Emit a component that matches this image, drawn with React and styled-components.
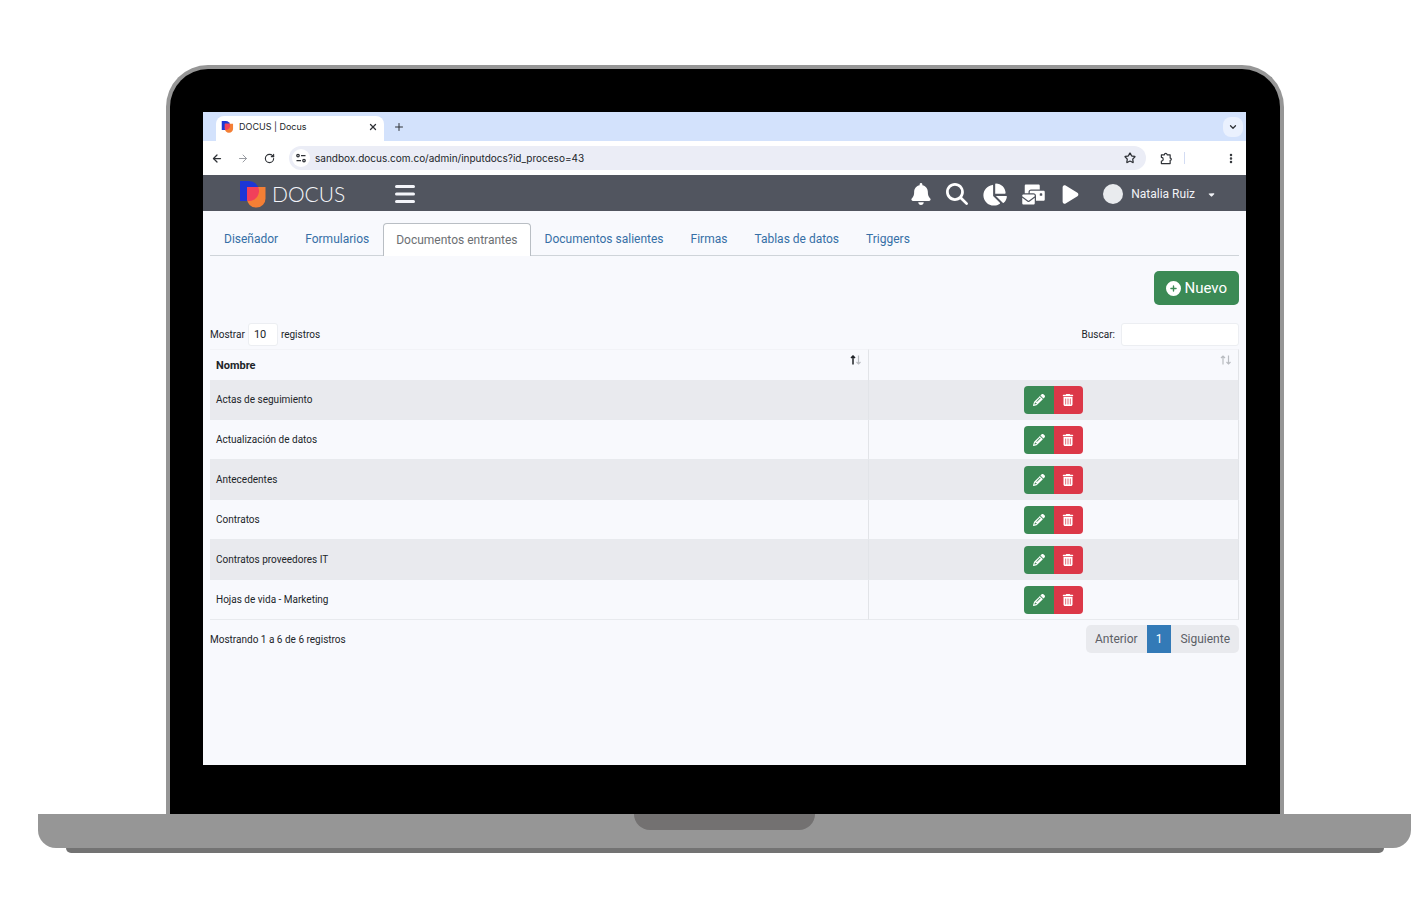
import React from 'react'
import styled, { createGlobalStyle } from 'styled-components';
import {
    FaBell,
    FaMagnifyingGlass,
    FaChartPie,
    FaEnvelopesBulk,
    FaPlay,
    FaCirclePlus,
    FaPencil,
    FaTrashCan,
    FaCaretDown,
} from 'react-icons/fa6';
import { ArrowLeft, ArrowRight, RotateCw, Star, Plus, X, ChevronDown, EllipsisVertical } from 'lucide-react';

const GlobalStyle = createGlobalStyle`
*{
    box-sizing: border-box;
}
body{
    margin: 0;
    background: #ffffff;
    font-family: Roboto, sans-serif;
    font-size: 10px;
    color: #212529;
}
button, input, select{
    font-family: inherit;
    font-size: inherit;
    color: inherit;
    margin: 0;
}
button{
    border: 0;
    padding: 0;
    background: none;
    cursor: pointer;
}
`;

/* ---------- laptop ---------- */

const Stage = styled.div`
padding: 65px 17px 52px 38px;
`;

const Lid = styled.div`
margin: 0 127px 0 128px;
padding: 43px 34px 49px 33px;
background: #000000;
border: 4px solid #969696;
border-bottom: 0;
border-radius: 42px 42px 0 0;
`;

const Screen = styled.div`
display: flex;
flex-direction: column;
min-height: 653px;
background: #f8f9fd;
`;

const Base = styled.div`
display: flex;
justify-content: center;
align-items: flex-start;
height: 34px;
background: #969696;
border-radius: 0 0 18px 18px;
`;

const Notch = styled.div`
width: 181px;
height: 16px;
background: #737171;
border-radius: 0 0 16px 16px;
`;

const Foot = styled.div`
height: 5px;
margin: 0 27px 0 28px;
background: #737373;
border-radius: 0 0 5px 5px;
`;

/* ---------- browser ---------- */

const TabStrip = styled.div`
display: flex;
align-items: flex-end;
height: 29px;
padding: 0 3px 0 13px;
background: #d3e2fc;
`;

const BrowserTab = styled.div`
display: flex;
align-items: center;
width: 168px;
height: 25px;
padding: 0 5px 4px 5px;
background: #ffffff;
border-radius: 8px 8px 0 0;
font-family: Inter, sans-serif;
font-size: 9px;
svg + span{
    flex: 1;
    margin-left: 5px;
}
`;

const IconButton = styled.button`
display: flex;
align-items: center;
justify-content: center;
width: ${({ $size }) => $size || 12}px;
height: ${({ $size }) => $size || 12}px;
border-radius: 8px;
background: ${({ $fill }) => $fill || 'none'};
color: ${({ $faded }) => ($faded ? '#9a9da3' : '#2f3237')};
`;

const StripTools = styled.div`
display: flex;
flex: 1;
align-items: center;
justify-content: space-between;
height: 28px;
padding-left: 9px;
`;

const Toolbar = styled.div`
display: flex;
align-items: center;
height: 34px;
padding: 0 9px 0 8px;
background: #ffffff;
`;

const History = styled.div`
display: flex;
gap: 14px;
margin-right: 14px;
`;

const Address = styled.div`
display: flex;
flex: 1;
align-items: center;
height: 24px;
padding: 0 10px 0 3px;
background: #ebedf6;
border-radius: 12px;
input{
    flex: 1;
    margin-left: 5px;
    padding: 0;
    border: 0;
    outline: 0;
    background: none;
    font-family: Inter, sans-serif;
    font-size: 10px;
}
`;

const SiteInfo = styled.button`
display: flex;
align-items: center;
justify-content: center;
width: 18px;
height: 18px;
border-radius: 9px;
background: #ffffff;
`;

const ToolbarEnd = styled.div`
display: flex;
align-items: center;
justify-content: space-between;
width: 77px;
margin-left: 14px;
`;

const Separator = styled.span`
width: 1px;
height: 12px;
margin-right: 28px;
background: #d3dcf3;
`;

/* ---------- application header ---------- */

const AppBar = styled.header`
display: flex;
align-items: center;
height: 36px;
padding: 2px 30px 0 37px;
background: #51555f;
color: #ffffff;
`;

const Brand = styled.a`
display: flex;
align-items: center;
gap: 6px;
margin-right: 50px;
color: #f4f5fa;
font-family: Lato, sans-serif;
font-size: 21px;
font-weight: 300;
line-height: 24px;
text-decoration: none;
`;

const BarButton = styled.button`
display: flex;
color: #ffffff;
`;

const BarActions = styled.div`
display: flex;
align-items: center;
gap: 14px;
margin-left: auto;
`;

const UserMenu = styled.button`
display: flex;
align-items: center;
margin-left: 8px;
color: #f2f3f7;
font-size: 12px;
line-height: 16px;
span{
    margin: 0 12px 0 8px;
}
`;

const Avatar = styled.i`
width: 20px;
height: 20px;
border-radius: 10px;
background: #e9ebee;
`;

/* ---------- page ---------- */

const Page = styled.main`
padding: 12px 7px 24px;
`;

const Tabs = styled.nav`
display: flex;
gap: 1px;
height: 33px;
padding-left: 1px;
border-bottom: 1px solid #cfd4d9;
`;

const Tab = styled.a`
height: 33px;
padding: ${({ $active }) => ($active ? '8px' : '7px')} 12px 0;
border: 1px solid ${({ $active }) => ($active ? '#b9bec4' : 'transparent')};
border-bottom: 0;
border-radius: 4px 4px 0 0;
background: ${({ $active }) => ($active ? '#ffffff' : 'none')};
color: ${({ $active }) => ($active ? '#6c6f73' : '#366fa6')};
font-size: 12px;
line-height: 16px;
text-decoration: none;
`;

const Actions = styled.div`
display: flex;
justify-content: flex-end;
margin: 15px 0 18px;
`;

const NewButton = styled.button`
display: flex;
align-items: center;
gap: 3px;
height: 34px;
padding: 0 12px;
border-radius: 5px;
background: #3b8a55;
color: #ffffff;
font-size: 15px;
`;

const Filters = styled.div`
display: flex;
justify-content: space-between;
height: 23px;
margin-bottom: 3px;
label{
    display: flex;
    align-items: center;
}
select, input{
    height: 23px;
    border: 1px solid #eceef2;
    border-radius: 3px;
    background: #ffffff;
}
select{
    appearance: none;
    width: 30px;
    margin: 0 3px;
    padding: 0 5px;
    font-size: 11px;
}
input{
    width: 118px;
    margin-left: 6px;
}
`;

const Table = styled.table`
width: 100%;
table-layout: fixed;
border-collapse: separate;
border-spacing: 0;
th, td{
    padding: 0 6px;
    text-align: left;
    border-right: 1px solid #e2e4e8;
}
th{
    height: 31px;
    border-top: 1px solid #f2f3f7;
    font-size: 11px;
    font-weight: 700;
}
th:first-child{
    width: 64%;
}
td{
    height: 40px;
    border-bottom: 1px solid #e8eaee;
}
tbody tr:nth-child(odd){
    background: #e9eaee;
}
`;

const HeadCell = styled.div`
display: flex;
justify-content: space-between;
align-items: center;
height: 20px;
`;

const SortButton = styled.button`
align-self: flex-start;
display: flex;
`;

const ButtonGroup = styled.div`
display: flex;
justify-content: center;
`;

const RowButton = styled.button`
display: flex;
align-items: center;
justify-content: center;
width: ${({ $danger }) => ($danger ? 29 : 30)}px;
height: 28px;
background: ${({ $danger }) => ($danger ? '#dc3848' : '#3b8a55')};
border-radius: ${({ $danger }) => ($danger ? '0 4px 4px 0' : '4px 0 0 4px')};
color: #ffffff;
`;

const Footer = styled.div`
display: flex;
justify-content: space-between;
align-items: center;
margin-top: 5px;
`;

const Pagination = styled.div`
display: flex;
border-radius: 5px;
overflow: hidden;
`;

const PageButton = styled.button`
height: 28px;
padding: 0 9px;
background: ${({ $active }) => ($active ? '#337ab7' : '#e9eaee')};
color: ${({ $active }) => ($active ? '#ffffff' : '#5c6066')};
font-size: 12px;
`;

function Logo({ width, height }) {
    return (
        <svg width={width} height={height} viewBox="0 0 26 27" aria-hidden="true">
            <path d="M0 0h9a10 10 0 0 1 0 20H0z" fill="#1c36d6" />
            <path d="M7 6h18.500v11a9 9 0 0 1-9 9.500a9 9 0 0 1-9.500-9.500z" fill="#f47f35" />
            <path d="M7 6h11.200a10 10 0 0 1-9.200 14H7.600A9 9 0 0 1 7 17z" fill="#f1405a" />
        </svg>
    )
}

function TuneIcon() {
    return (
        <svg width="10" height="10" viewBox="0 0 20 20" fill="none" stroke="#2f3237" strokeWidth="2.500" aria-hidden="true">
            <circle cx="4" cy="5" r="2.500" />
            <path d="M10 5h9M1 15h9" />
            <circle cx="16" cy="15" r="2.500" />
        </svg>
    )
}

function ExtensionIcon() {
    return (
        <svg width="13" height="13" viewBox="0 0 26 26" fill="none" stroke="#2f3237" strokeWidth="2.600" strokeLinejoin="round" aria-hidden="true">
            <path d="M3 5h6.500a3 3 0 0 1 6 0H22v7a2.500 2.500 0 0 1 0 5V24H3v-5.500a4 4 0 0 0 0-8z" />
        </svg>
    )
}

function MenuIcon() {
    return (
        <svg width="20" height="18" viewBox="0 0 20 18" stroke="#f4f5fa" strokeWidth="3" strokeLinecap="round" aria-hidden="true">
            <path d="M1.500 1.500h17M1.500 9h17M1.500 16.500h17" />
        </svg>
    )
}

function SortIcon({ sorted }) {
    return (
        <svg width="12" height="10" viewBox="0 0 12 10" fill="none" strokeWidth="1.200" aria-hidden="true">
            <path d="M3 9.500V1M1 3l2-2 2 2" stroke={sorted ? '#212529' : '#b9bcc1'} strokeWidth={sorted ? 1.5 : 1.2} />
            <path d="M8.500 .5V9M6.500 7l2 2 2-2" stroke="#b9bcc1" />
        </svg>
    )
}

const tabs = [
    'Diseñador',
    'Formularios',
    'Documentos entrantes',
    'Documentos salientes',
    'Firmas',
    'Tablas de datos',
    'Triggers',
];

const documents = [
    'Actas de seguimiento',
    'Actualización de datos',
    'Antecedentes',
    'Contratos',
    'Contratos proveedores IT',
    'Hojas de vida - Marketing',
];

function Browser() {
    return (
        <>
            <TabStrip>
                <BrowserTab>
                    <Logo width={13} height={12} />
                    <span>DOCUS | Docus</span>
                    <IconButton aria-label="Cerrar pestaña"><X size={10} strokeWidth={3} /></IconButton>
                </BrowserTab>
                <StripTools>
                    <IconButton aria-label="Nueva pestaña"><Plus size={12} /></IconButton>
                    <IconButton aria-label="Buscar pestañas" $size={20} $fill="#eaf1fe"><ChevronDown size={10} strokeWidth={3} /></IconButton>
                </StripTools>
            </TabStrip>
            <Toolbar>
                <History>
                    <IconButton aria-label="Atrás"><ArrowLeft size={13} strokeWidth={2.5} /></IconButton>
                    <IconButton aria-label="Adelante" $faded><ArrowRight size={13} /></IconButton>
                    <IconButton aria-label="Recargar"><RotateCw size={11} strokeWidth={2.5} /></IconButton>
                </History>
                <Address>
                    <SiteInfo aria-label="Información del sitio"><TuneIcon /></SiteInfo>
                    <input aria-label="Dirección" defaultValue="sandbox.docus.com.co/admin/inputdocs?id_proceso=43" />
                    <IconButton aria-label="Marcador"><Star size={12} strokeWidth={2.5} /></IconButton>
                </Address>
                <ToolbarEnd>
                    <IconButton aria-label="Extensiones"><ExtensionIcon /></IconButton>
                    <Separator />
                    <IconButton aria-label="Más opciones"><EllipsisVertical size={13} strokeWidth={3} /></IconButton>
                </ToolbarEnd>
            </Toolbar>
        </>
    )
}

function Header() {
    return (
        <AppBar>
            <Brand href="#"><Logo width={26} height={27} />DOCUS</Brand>
            <BarButton aria-label="Menú"><MenuIcon /></BarButton>
            <BarActions>
                <BarButton aria-label="Notificaciones"><FaBell size={22} /></BarButton>
                <BarButton aria-label="Buscar"><FaMagnifyingGlass size={22} /></BarButton>
                <BarButton aria-label="Reportes"><FaChartPie size={25} /></BarButton>
                <BarButton aria-label="Correos"><FaEnvelopesBulk size={25} /></BarButton>
                <BarButton aria-label="Iniciar"><FaPlay size={21} /></BarButton>
                <UserMenu><Avatar /><span>Natalia Ruiz</span><FaCaretDown size={9} /></UserMenu>
            </BarActions>
        </AppBar>
    )
}

function Documents() {
    return (
        <Page>
            <Tabs>
                {tabs.map((tab) => (
                    <Tab key={tab} href="#" $active={tab === 'Documentos entrantes'}>{tab}</Tab>
                ))}
            </Tabs>

            <Actions>
                <NewButton><FaCirclePlus size={15} />Nuevo</NewButton>
            </Actions>

            <Filters>
                <label>
                    Mostrar
                    <select defaultValue="10">
                        <option>10</option>
                        <option>25</option>
                        <option>50</option>
                    </select>
                    registros
                </label>
                <label>Buscar:<input type="search" /></label>
            </Filters>

            <Table>
                <thead>
                    <tr>
                        <th><HeadCell>Nombre<SortButton aria-label="Ordenar por nombre"><SortIcon sorted /></SortButton></HeadCell></th>
                        <th><HeadCell><span /><SortButton aria-label="Ordenar por acciones"><SortIcon /></SortButton></HeadCell></th>
                    </tr>
                </thead>
                <tbody>
                    {documents.map((name) => (
                        <tr key={name}>
                            <td>{name}</td>
                            <td>
                                <ButtonGroup>
                                    <RowButton aria-label={`Editar ${name}`}><FaPencil size={12} /></RowButton>
                                    <RowButton aria-label={`Eliminar ${name}`} $danger><FaTrashCan size={12} /></RowButton>
                                </ButtonGroup>
                            </td>
                        </tr>
                    ))}
                </tbody>
            </Table>

            <Footer>
                <span>Mostrando 1 a 6 de 6 registros</span>
                <Pagination>
                    <PageButton>Anterior</PageButton>
                    <PageButton $active>1</PageButton>
                    <PageButton>Siguiente</PageButton>
                </Pagination>
            </Footer>
        </Page>
    )
}

function App() {
    return (
        <Stage>
            <GlobalStyle />
            <Lid>
                <Screen>
                    <Browser />
                    <Header />
                    <Documents />
                </Screen>
            </Lid>
            <Base><Notch /></Base>
            <Foot />
        </Stage>
    )
}

export default App;
